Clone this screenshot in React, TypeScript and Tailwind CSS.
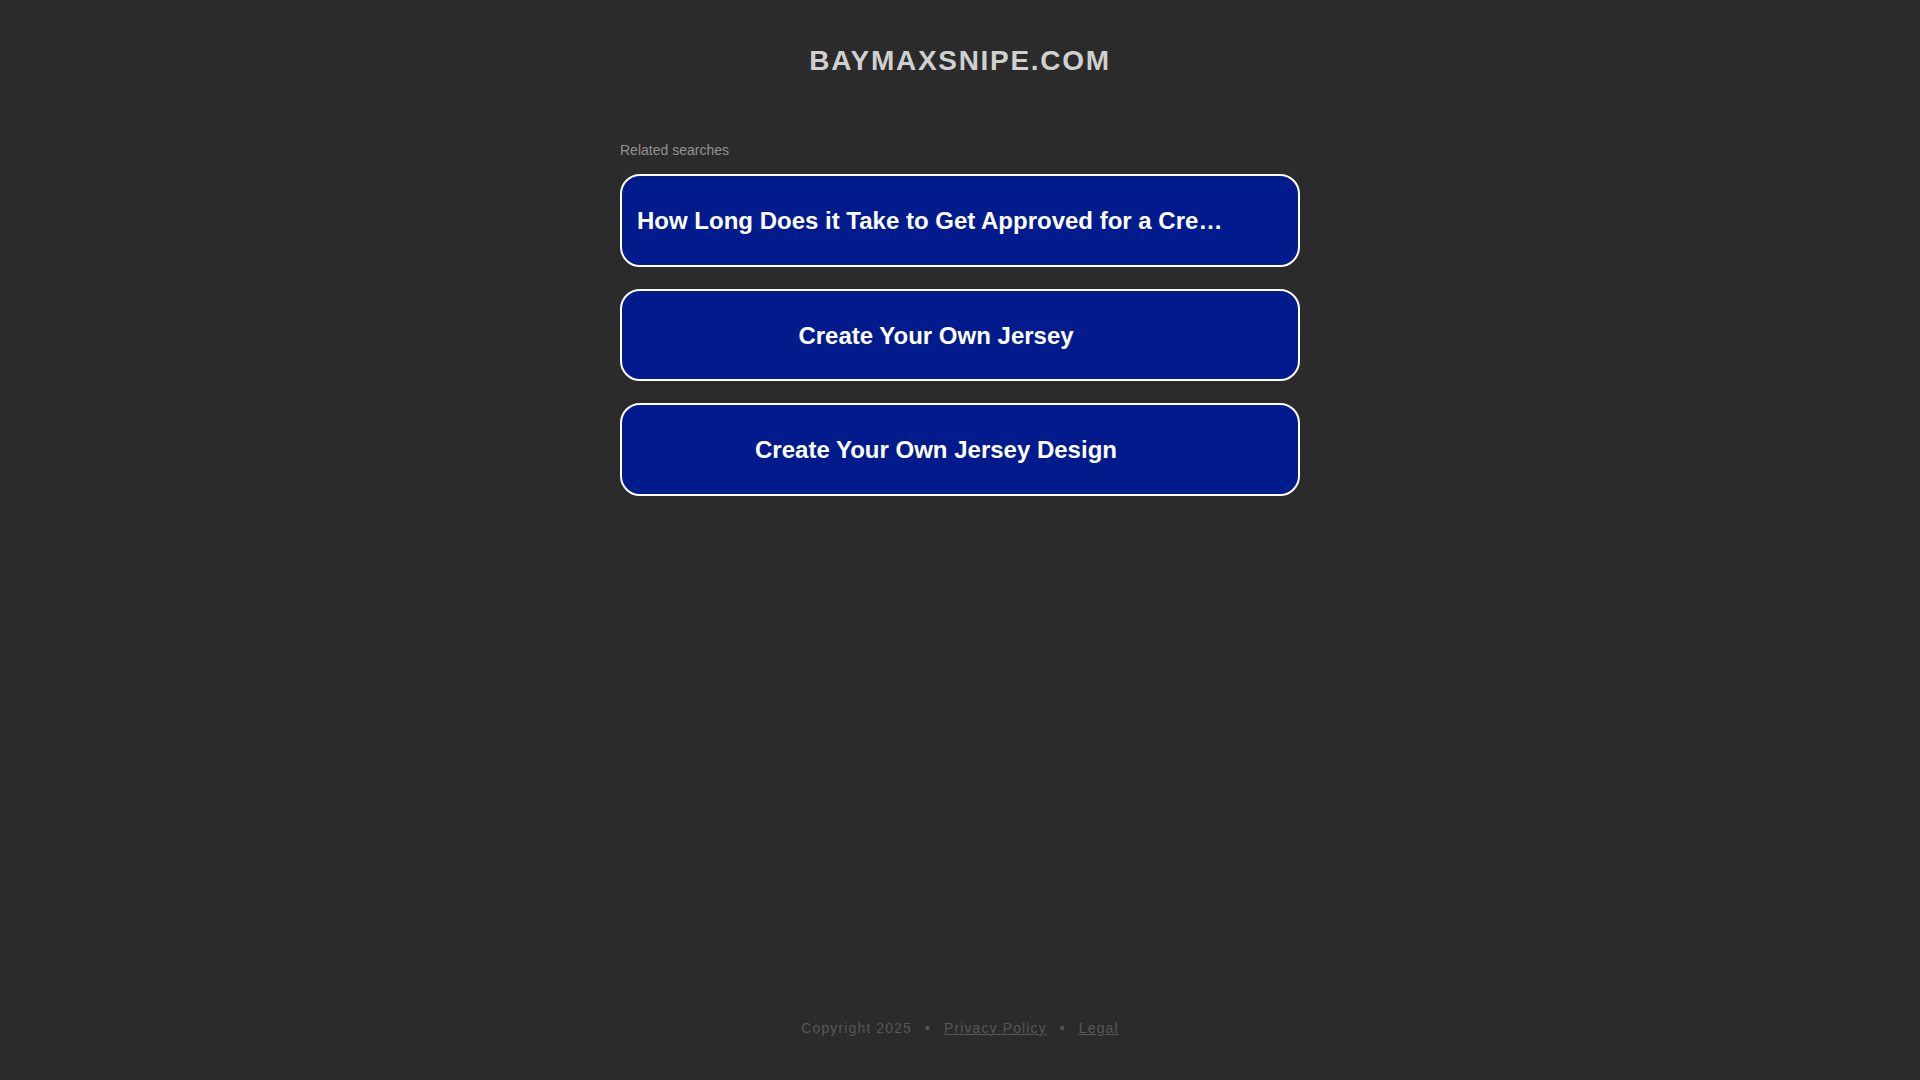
export default function App() {
  const searches = [
    "How Long Does it Take to Get Approved for a Credit Card",
    "Create Your Own Jersey",
    "Create Your Own Jersey Design",
  ];

  return (
    <div className="min-h-screen bg-[#2b2b2b] flex flex-col font-['Liberation_Sans',Arial,sans-serif]">
      <header className="pt-[47px]">
        <h1 className="text-center text-[28px] leading-[28px] font-bold tracking-[1.7px] text-[#d0d0d0]">
          BAYMAXSNIPE.COM
        </h1>
      </header>

      <main className="w-[680px] mx-auto mt-[68px]">
        <p className="text-[14px] leading-[14px] text-[#929292]">Related searches</p>
        <div className="mt-[17px] flex flex-col gap-[22px]">
          {searches.map((item) => (
            <a
              key={item}
              href="#"
              className="h-[92.5px] flex items-center border-2 border-white rounded-[20px] bg-[#011b8c] pl-[15px] pr-[63px] pt-[2px]"
            >
              <span className="block w-full truncate text-center text-[24px] leading-[28px] font-bold text-white">
                {item}
              </span>
            </a>
          ))}
        </div>
      </main>

      <footer className="mt-auto pb-[45px] text-center text-[14px] leading-[14px] tracking-[1.12px] text-[#585858]">
        <span>Copyright 2025</span>
        <span className="mx-2"> • </span>
        <a href="#" className="underline">Privacy Policy</a>
        <span className="mx-2"> • </span>
        <a href="#" className="underline">Legal</a>
      </footer>
    </div>
  );
}
